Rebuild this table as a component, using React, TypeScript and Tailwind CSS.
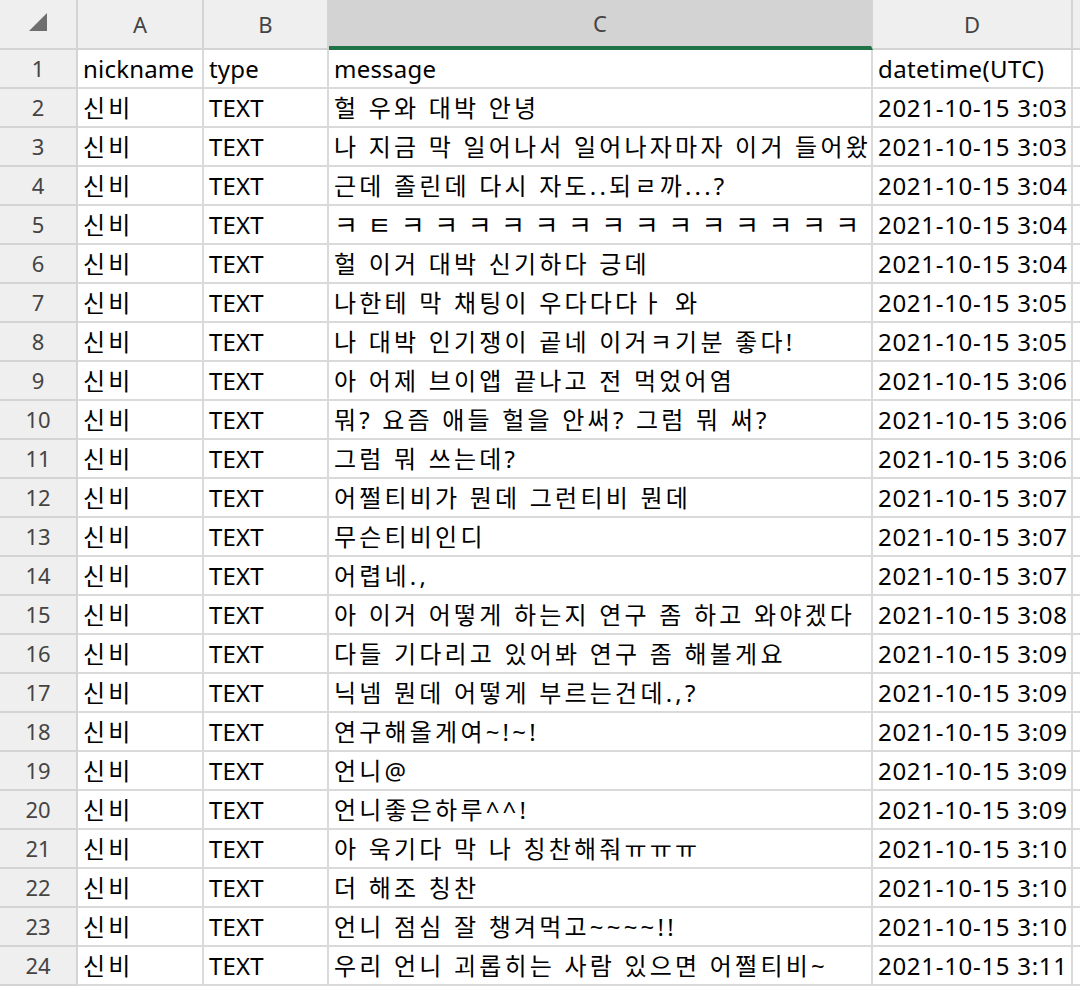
const rows: [string, string, string, string][] = [
  ['nickname', 'type', 'message', 'datetime(UTC)'],
  ['신비', 'TEXT', '헐 우와 대박 안녕', '2021-10-15 3:03'],
  ['신비', 'TEXT', '나 지금 막 일어나서 일어나자마자 이거 들어왔어', '2021-10-15 3:03'],
  ['신비', 'TEXT', '근데 졸린데 다시 자도..되ㄹ까...?', '2021-10-15 3:04'],
  ['신비', 'TEXT', 'ㅋㅌㅋㅋㅋㅋㅋㅋㅋㅋㅋㅋㅋㅋㅋㅋㅋㅋㅋㅋ', '2021-10-15 3:04'],
  ['신비', 'TEXT', '헐 이거 대박 신기하다 긍데', '2021-10-15 3:04'],
  ['신비', 'TEXT', '나한테 막 채팅이 우다다다ㅏ 와', '2021-10-15 3:05'],
  ['신비', 'TEXT', '나 대박 인기쟁이 곹네 이거ㅋ기분 좋다!', '2021-10-15 3:05'],
  ['신비', 'TEXT', '아 어제 브이앱 끝나고 전 먹었어염', '2021-10-15 3:06'],
  ['신비', 'TEXT', '뭐? 요즘 애들 헐을 안써? 그럼 뭐 써?', '2021-10-15 3:06'],
  ['신비', 'TEXT', '그럼 뭐 쓰는데?', '2021-10-15 3:06'],
  ['신비', 'TEXT', '어쩔티비가 뭔데 그런티비 뭔데', '2021-10-15 3:07'],
  ['신비', 'TEXT', '무슨티비인디', '2021-10-15 3:07'],
  ['신비', 'TEXT', '어렵네.,', '2021-10-15 3:07'],
  ['신비', 'TEXT', '아 이거 어떻게 하는지 연구 좀 하고 와야겠다', '2021-10-15 3:08'],
  ['신비', 'TEXT', '다들 기다리고 있어봐 연구 좀 해볼게요', '2021-10-15 3:09'],
  ['신비', 'TEXT', '닉넴 뭔데 어떻게 부르는건데.,?', '2021-10-15 3:09'],
  ['신비', 'TEXT', '연구해올게여~!~!', '2021-10-15 3:09'],
  ['신비', 'TEXT', '언니@', '2021-10-15 3:09'],
  ['신비', 'TEXT', '언니좋은하루^^!', '2021-10-15 3:09'],
  ['신비', 'TEXT', '아 욱기다 막 나 칭찬해줘ㅠㅠㅠ', '2021-10-15 3:10'],
  ['신비', 'TEXT', '더 해조 칭찬', '2021-10-15 3:10'],
  ['신비', 'TEXT', '언니 점심 잘 챙겨먹고~~~~!!', '2021-10-15 3:10'],
  ['신비', 'TEXT', '우리 언니 괴롭히는 사람 있으면 어쩔티비~', '2021-10-15 3:11'],
];

const font = { fontFamily: '"Noto Sans", "Noto Sans CJK KR", sans-serif' };

const cols = 'grid grid-cols-[78px_126px_125px_544px_200px_1fr]';

// Korean columns get wider tracking to match the wider hangul in the shot
const cellClass = (row: number, col: number) => {
  if (row === 0) return col === 3 ? 'tracking-[0.4px]' : 'tracking-[0.2px]';
  if (row === 4 && col === 2) return 'tracking-[9.5px] text-[26px]';
  if (col === 0 || col === 2) return 'tracking-[3.2px]';
  if (col === 3) return 'tracking-[0.7px]';
  return 'tracking-[0.2px]';
};

export default function App() {
  return (
    <div className="w-[1080px] h-[986px] overflow-hidden bg-white text-black" style={font}>
      {/* column headers */}
      <div className={`${cols} h-[50px]`}>
        <div className="relative bg-[#efefef] border-r-2 border-b-2 border-[#d4d4d4]">
          <svg className="absolute left-[29px] top-[13px]" width="18" height="18" viewBox="0 0 18 18">
            <path d="M18 0 L18 18 L0 18 Z" fill="#6e6e6e" />
          </svg>
        </div>
        {['A', 'B'].map((c) => (
          <div key={c} className="flex items-center justify-center bg-[#efefef] border-r-2 border-b-2 border-[#d4d4d4] text-[22px] text-[#444]">
            {c}
          </div>
        ))}
        <div className="flex items-center justify-center bg-[#d3d3d3] border-r-2 border-[#d4d4d4] border-b-[4px] border-b-[#217346] text-[22px] text-[#444]">
          C
        </div>
        <div className="flex items-center justify-center bg-[#efefef] border-r-2 border-b-2 border-[#d4d4d4] text-[22px] text-[#444]">
          D
        </div>
        <div className="bg-[#efefef] border-b-2 border-[#d4d4d4]" />
      </div>

      {/* rows */}
      {rows.map((r, i) => (
        <div key={i} className={`${cols} h-[39px]`}>
          <div className="flex items-center justify-center bg-[#efefef] border-r-2 border-b-2 border-[#d4d4d4] text-[22px] text-[#444]">
            {i + 1}
          </div>
          {r.map((v, j) => (
            <div
              key={j}
              className={`flex items-center pl-[5px] border-r-2 border-b-2 border-[#dadada] text-[24px] leading-none whitespace-nowrap overflow-hidden ${cellClass(i, j)}`}
            >
              {v}
            </div>
          ))}
          <div className="border-b-2 border-[#dadada]" />
        </div>
      ))}
    </div>
  );
}
